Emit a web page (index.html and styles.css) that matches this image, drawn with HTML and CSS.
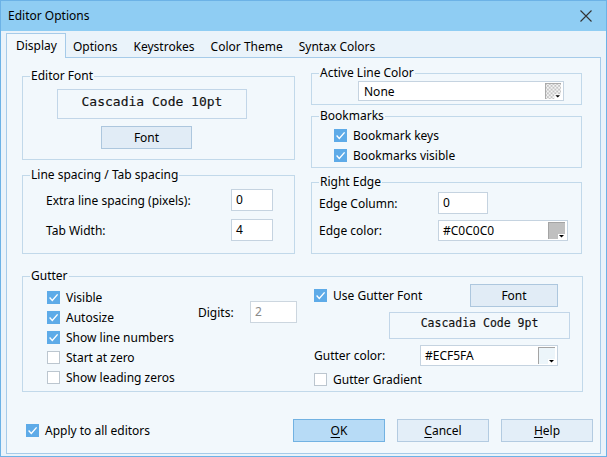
FILE: index.html
```html
<!DOCTYPE html>
<html>
<head>
<meta charset="utf-8">
<link rel="stylesheet" href="styles.css">
</head>
<body>
<div class="window">
  <div class="titlebar">
    <span class="title">Editor Options</span>
    <svg class="close" width="12" height="12" viewBox="0 0 12 12"><path d="M0.5 0.5 L11.5 11.5 M11.5 0.5 L0.5 11.5" stroke="#333" stroke-width="1.1" fill="none"/></svg>
  </div>
  <div class="client">
    <div class="tabs">
      <div class="tab active">Display</div>
      <div class="tab">Options</div>
      <div class="tab">Keystrokes</div>
      <div class="tab">Color Theme</div>
      <div class="tab">Syntax Colors</div>
    </div>
    <div class="page">
      <div class="columns">
        <div class="col col-left">
          <fieldset class="grp g-font">
            <legend>Editor Font</legend>
            <div class="fontbox big">Cascadia Code 10pt</div>
            <div class="btn btn-font1">Font</div>
          </fieldset>
          <fieldset class="grp g-spacing">
            <legend>Line spacing / Tab spacing</legend>
            <div class="row sp-row">
              <span class="lbl sp-lbl">Extra line spacing (pixels):</span>
              <div class="input sp-input">0</div>
            </div>
            <div class="row sp-row sp-row2">
              <span class="lbl sp-lbl">Tab Width:</span>
              <div class="input sp-input">4</div>
            </div>
          </fieldset>
        </div>
        <div class="col col-right">
          <fieldset class="grp g-active">
            <legend>Active Line Color</legend>
            <div class="combo combo-active">
              <span class="ctext">None</span>
              <svg class="swatch" width="17" height="17" viewBox="0 0 17 17">
                <defs>
                  <pattern id="chk" width="4" height="4" patternUnits="userSpaceOnUse">
                    <rect width="4" height="4" fill="#f4f4f4"/>
                    <rect width="2" height="2" fill="#c4c4c4"/>
                    <rect x="2" y="2" width="2" height="2" fill="#c4c4c4"/>
                  </pattern>
                </defs>
                <rect x="0" y="0" width="17" height="17" fill="#a8a8a8"/>
                <rect x="1" y="1" width="16" height="16" fill="url(#chk)"/>
                <rect x="10" y="12" width="7" height="5" fill="#ffffff"/>
                <path d="M11 13 H16 L13.5 15.5 Z" fill="#000"/>
              </svg>
            </div>
          </fieldset>
          <fieldset class="grp g-bookmarks">
            <legend>Bookmarks</legend>
            <div class="check bm-check">
              <svg class="cb" width="13" height="13" viewBox="0 0 13 13"><rect width="13" height="13" fill="#5eabe8"/><path d="M2.6 6.6 L5.3 9.4 L10.6 3.4" stroke="#fff" stroke-width="1.4" fill="none"/></svg>
              <span>Bookmark keys</span>
            </div>
            <div class="check bm-check">
              <svg class="cb" width="13" height="13" viewBox="0 0 13 13"><rect width="13" height="13" fill="#5eabe8"/><path d="M2.6 6.6 L5.3 9.4 L10.6 3.4" stroke="#fff" stroke-width="1.4" fill="none"/></svg>
              <span>Bookmarks visible</span>
            </div>
          </fieldset>
          <fieldset class="grp g-edge">
            <legend>Right Edge</legend>
            <div class="row">
              <span class="lbl edge-lbl">Edge Column:</span>
              <div class="input edge-input">0</div>
            </div>
            <div class="row edge-row2">
              <span class="lbl edge-lbl">Edge color:</span>
              <div class="combo combo-edge">
                <span class="ctext">#C0C0C0</span>
                <svg class="swatch" width="17" height="17" viewBox="0 0 17 17">
                  <rect x="0" y="0" width="17" height="17" fill="#a4a4a4"/>
                  <rect x="1" y="1" width="16" height="16" fill="#c0c0c0"/>
                  <rect x="10" y="12" width="7" height="5" fill="#ffffff"/>
                  <path d="M11 13 H16 L13.5 15.5 Z" fill="#000"/>
                </svg>
              </div>
            </div>
          </fieldset>
        </div>
      </div>
      <fieldset class="grp g-gutter">
        <legend>Gutter</legend>
        <div class="gutter-body">
          <div class="gut-list">
            <div class="check">
              <svg class="cb" width="13" height="13" viewBox="0 0 13 13"><rect width="13" height="13" fill="#5eabe8"/><path d="M2.6 6.6 L5.3 9.4 L10.6 3.4" stroke="#fff" stroke-width="1.4" fill="none"/></svg>
              <span>Visible</span>
            </div>
            <div class="check">
              <svg class="cb" width="13" height="13" viewBox="0 0 13 13"><rect width="13" height="13" fill="#5eabe8"/><path d="M2.6 6.6 L5.3 9.4 L10.6 3.4" stroke="#fff" stroke-width="1.4" fill="none"/></svg>
              <span>Autosize</span>
            </div>
            <div class="check">
              <svg class="cb" width="13" height="13" viewBox="0 0 13 13"><rect width="13" height="13" fill="#5eabe8"/><path d="M2.6 6.6 L5.3 9.4 L10.6 3.4" stroke="#fff" stroke-width="1.4" fill="none"/></svg>
              <span>Show line numbers</span>
            </div>
            <div class="check">
              <span class="cb cb-off"></span>
              <span>Start at zero</span>
            </div>
            <div class="check">
              <span class="cb cb-off"></span>
              <span>Show leading zeros</span>
            </div>
          </div>
          <div class="digits">
            <span class="lbl digits-lbl">Digits:</span>
            <div class="input digits-input">2</div>
          </div>
          <div class="gut-right">
            <div class="gr-row1">
              <div class="check">
                <svg class="cb" width="13" height="13" viewBox="0 0 13 13"><rect width="13" height="13" fill="#5eabe8"/><path d="M2.6 6.6 L5.3 9.4 L10.6 3.4" stroke="#fff" stroke-width="1.4" fill="none"/></svg>
                <span>Use Gutter Font</span>
              </div>
              <div class="btn btn-font2">Font</div>
            </div>
            <div class="fontbox small">Cascadia Code 9pt</div>
            <div class="row gr-row3">
              <span class="lbl gc-lbl">Gutter color:</span>
              <div class="combo combo-gutter">
                <span class="ctext">#ECF5FA</span>
                <svg class="swatch" width="17" height="17" viewBox="0 0 17 17">
                  <rect x="0" y="0" width="17" height="17" fill="#a4a4a4"/>
                  <rect x="1" y="1" width="16" height="16" fill="#ecf5fa"/>
                  <rect x="10" y="12" width="7" height="5" fill="#ffffff"/>
                  <path d="M11 13 H16 L13.5 15.5 Z" fill="#000"/>
                </svg>
              </div>
            </div>
            <div class="check gr-row4">
              <span class="cb cb-off"></span>
              <span>Gutter Gradient</span>
            </div>
          </div>
        </div>
      </fieldset>
      <div class="footer">
        <div class="check">
          <svg class="cb" width="13" height="13" viewBox="0 0 13 13"><rect width="13" height="13" fill="#5eabe8"/><path d="M2.6 6.6 L5.3 9.4 L10.6 3.4" stroke="#fff" stroke-width="1.4" fill="none"/></svg>
          <span>Apply to all editors</span>
        </div>
        <div class="buttons">
          <div class="btn dbtn default"><u>O</u>K</div>
          <div class="btn dbtn"><u>C</u>ancel</div>
          <div class="btn dbtn"><u>H</u>elp</div>
        </div>
      </div>
    </div>
  </div>
</div>
</body>
</html>
```

FILE: styles.css
```css
html, body {
  margin: 0;
  padding: 0;
  background: #eaf3fa;
}

body {
  font-family: "Noto Sans", "Open Sans", sans-serif;
  font-size: 12px;
  color: #000;
}

.window {
  width: 607px;
  height: 457px;
  box-sizing: border-box;
  border: 1px solid #6cb2e6;
  background: #eaf3fa;
  display: flex;
  flex-direction: column;
}

.titlebar {
  height: 30px;
  flex: none;
  background: #8fcdf3;
  display: flex;
  align-items: center;
  justify-content: space-between;
  padding: 0 14px 0 7px;
}

.title {
  line-height: 16px;
  margin-top: -1px;
}

.close {
  display: block;
  margin-top: -1px;
}

.client {
  flex: 1;
  display: flex;
  flex-direction: column;
  padding: 2px 5px 2px 5px;
  min-height: 0;
}

.tabs {
  display: flex;
  align-items: flex-end;
  height: 24px;
  flex: none;
}

.tab {
  height: 22px;
  line-height: 22px;
  padding: 1px 8px 0 8px;
  box-sizing: border-box;
  white-space: nowrap;
}

.tab:nth-child(2) {
  padding-left: 7px;
}

.tab.active {
  height: 25px;
  line-height: 24px;
  padding: 0 8px 0 9px;
  margin-bottom: -1px;
  border: 1px solid #a6cbe9;
  border-bottom: none;
  background: #f2f8fc;
  position: relative;
  z-index: 1;
}

.page {
  flex: 1;
  border: 1px solid #a6cbe9;
  background: #f2f8fc;
  display: flex;
  flex-direction: column;
  padding: 0 17px 0 15px;
  min-height: 0;
}

.columns {
  display: grid;
  grid-template-columns: 273px 271px;
  column-gap: 16px;
  padding-top: 8px;
}

.col {
  display: flex;
  flex-direction: column;
}

.col-left {
  padding-top: 3px;
}

.grp {
  margin: 0;
  border: 1px solid #c2d9ea;
  padding: 0 7px;
  min-width: 0;
}

.grp legend {
  padding: 0 1px;
  margin: 0;
  line-height: 14px;
  font-size: 12px;
}

/* Editor font */
.g-font {
  padding-top: 6px;
  padding-bottom: 10px;
}

.fontbox {
  box-sizing: border-box;
  border: 1px solid #c2d6e8;
  background: #f2f8fc;
  display: flex;
  justify-content: center;
  font-family: "DejaVu Sans Mono", "Liberation Mono", monospace;
  color: #111;
  -webkit-text-stroke: 0.15px #111;
}

.fontbox.big {
  width: 190px;
  height: 30px;
  margin-left: 27px;
  font-size: 13px;
  line-height: 24px;
}

.btn {
  box-sizing: border-box;
  border: 1px solid #adc7de;
  background: #e1ecf6;
  text-align: center;
}

.btn-font1 {
  width: 91px;
  height: 23px;
  line-height: 21px;
  margin-top: 7px;
  margin-left: 71px;
}

/* Spacing */
.g-spacing {
  margin-top: 8px;
  padding-top: 7px;
  padding-bottom: 12px;
}

.row {
  display: flex;
  align-items: center;
}

.sp-row {
  padding-left: 16px;
}

.sp-row2 {
  margin-top: 8px;
}

.sp-lbl {
  width: 185px;
}

.input {
  box-sizing: border-box;
  border: 1px solid #c5d3e0;
  background: #fff;
  padding-left: 4px;
  line-height: 20px;
}

.sp-input {
  width: 42px;
  height: 22px;
}

/* Active line color */
.g-active {
  padding-top: 1px;
  padding-bottom: 3px;
}

.combo {
  box-sizing: border-box;
  border: 1px solid #c5d3e0;
  background: #fff;
  display: flex;
  align-items: center;
  justify-content: space-between;
  padding: 0 2px 0 4px;
}

.combo-active {
  width: 206px;
  height: 20px;
  margin-left: 39px;
  padding-left: 5px;
}

.swatch {
  display: block;
  flex: none;
}

.combo-active .swatch {
  width: 16px;
  height: 16px;
}

/* Bookmarks */
.g-bookmarks {
  margin-top: 4px;
  padding-top: 2px;
  padding-bottom: 2px;
}

.check {
  display: flex;
  align-items: center;
  height: 20px;
  white-space: nowrap;
}

.cb {
  display: block;
  flex: none;
  width: 13px;
  height: 13px;
  margin-right: 6px;
}

.cb-off {
  box-sizing: border-box;
  border: 1px solid #bcc6cf;
  background: #fff;
}

.bm-check {
  margin-left: 15px;
}

/* Right edge */
.g-edge {
  margin-top: 7px;
  padding-top: 3px;
  padding-bottom: 12px;
}

.edge-lbl {
  width: 119px;
}

.edge-input {
  width: 50px;
  height: 22px;
}

.edge-row2 {
  margin-top: 6px;
}

.combo-edge {
  width: 130px;
  height: 21px;
}

/* Gutter */
.g-gutter {
  margin-top: 15px;
  padding-top: 0;
  padding-bottom: 0;
}

.gutter-body {
  display: flex;
  align-items: flex-start;
}

.gut-list {
  margin-left: 17px;
  width: 151px;
  padding-top: 4px;
  padding-bottom: 4px;
}

.digits {
  display: flex;
  align-items: center;
  margin-top: 18px;
  width: 116px;
}

.digits-lbl {
  width: 52px;
}

.digits-input {
  width: 47px;
  height: 22px;
  color: #8a8a8a;
  border-color: #ccd6df;
}

.gut-right {
  width: 256px;
  padding-top: 1px;
}

.gr-row1 {
  display: flex;
  align-items: center;
  justify-content: space-between;
  padding-right: 12px;
}

.btn-font2 {
  width: 88px;
  height: 23px;
  line-height: 21px;
}

.fontbox.small {
  width: 181px;
  height: 27px;
  margin-top: 5px;
  margin-left: 75px;
  font-size: 11.5px;
  line-height: 21px;
}

.gr-row3 {
  margin-top: 6px;
}

.gc-lbl {
  width: 106px;
}

.combo-gutter {
  width: 138px;
  height: 21px;
}

.gr-row4 {
  margin-top: 3px;
}

/* Footer */
.footer {
  display: flex;
  align-items: center;
  margin-top: 27px;
  margin-left: 4px;
  margin-right: -10px;
  height: 23px;
}

.buttons {
  display: flex;
  gap: 12px;
  margin-left: auto;
}

.dbtn {
  width: 92px;
  height: 23px;
  line-height: 21px;
  background: #e3eef8;
  border-color: #b3cbe1;
}

.dbtn.default {
  background: #b7dbf6;
  border-color: #72b2e2;
}

.dbtn u {
  text-decoration: underline;
  text-underline-offset: 2px;
}
```
